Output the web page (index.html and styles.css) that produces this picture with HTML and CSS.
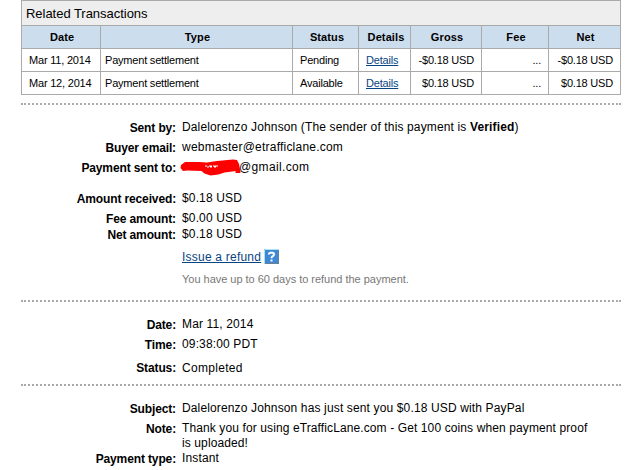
FILE: index.html
```html
<!DOCTYPE html>
<html lang="en">
<head>
<meta charset="utf-8">
<title>Transaction Details</title>
<link rel="stylesheet" href="styles.css">
</head>
<body>
<main class="page">
  <section class="transactions">
    <h2 class="caption">Related Transactions</h2>
    <div class="row head"><span>Date</span><span>Type</span><span class="status">Status</span><span class="details">Details</span><span>Gross</span><span>Fee</span><span>Net</span></div>
    <div class="row"><span>Mar 11, 2014</span><span>Payment settlement</span><span>Pending</span><span><a href="#">Details</a></span><span>-$0.18 USD</span><span>...</span><span>-$0.18 USD</span></div>
    <div class="row"><span>Mar 12, 2014</span><span>Payment settlement</span><span>Available</span><span><a href="#">Details</a></span><span>$0.18 USD</span><span>...</span><span>$0.18 USD</span></div>
  </section>

  <dl class="group parties">
    <dt>Sent by:</dt><dd class="sender">Dalelorenzo Johnson (The sender of this payment is <b>Verified</b>)</dd>
    <dt>Buyer email:</dt><dd class="email">webmaster@etrafficlane.com</dd>
    <dt>Payment sent to:</dt><dd class="recipient"><svg class="scribble" width="61" height="18" viewBox="0 0 61 18"><path fill="#f00" d="M5 3h14l8 .5L37 2l16-1.500 4 .5 2 4 1 5 .5 4h-5v-2l-3 .5-8 1-6 2-8 1-6-2-3-2.500-14-.5L3 12 .5 9 1 6z"/><path fill="#fff" d="M25 6.500h2v1h2v-1h3v1h1v-1h5v1h-2v1h-2v-1h-2v1h-2v-1h-1v1h-2v-1h-2z"/></svg>@gmail.com</dd>
  </dl>
  <dl class="group amounts">
    <dt>Amount received:</dt><dd>$0.18 USD</dd>
    <dt>Fee amount:</dt><dd>$0.00 USD</dd>
    <dt>Net amount:</dt><dd>$0.18 USD</dd>
  </dl>
  <div class="refund">
    <a href="#">Issue a refund</a><svg class="help" width="15" height="15" viewBox="0 0 15 15"><path fill="#3f88d5" d="M0 0h15v15H0z"/><path fill="none" stroke="#a9e4ee" d="M.5 15V.5H15"/><path fill="none" stroke="#6b7f93" d="M1 14.500h13.500V1"/><path fill="none" stroke="#fff" stroke-width="2" d="M5 5.500V4.800Q5.200 3.800 6.500 3.800h2Q10 3.800 10 5.200T8.500 7.300Q7.500 8 7.500 9.300M7.500 10.500v2"/></svg>
  </div>
  <p class="hint">You have up to 60 days to refund the payment.</p>

  <dl class="group timing">
    <dt>Date:</dt><dd>Mar 11, 2014</dd>
    <dt>Time:</dt><dd>09:38:00 PDT</dd>
    <dt class="level">Status:</dt><dd class="state">Completed</dd>
  </dl>

  <dl class="group message">
    <dt>Subject:</dt><dd>Dalelorenzo Johnson has just sent you $0.18 USD with PayPal</dd>
    <dt>Note:</dt><dd class="note">Thank you for using eTrafficLane.com - Get 100 coins when payment proof<br>is uploaded!</dd>
    <dt>Payment type:</dt><dd>Instant</dd>
  </dl>
</main>
</body>
</html>
```
FILE: styles.css
```css
* { box-sizing: border-box; }
body {
  margin: 0;
  background: #fff;
  color: #000;
  font: 12px/15px "Liberation Sans", Arial, sans-serif;
}
a { color: #084482; }
.page { width: 600px; height: 470px; margin-left: 21px; overflow: hidden; white-space: nowrap; }

.transactions { border: 1px solid #aaa; font-size: 11px; letter-spacing: -.2px; }
.caption { margin: 0; height: 24px; padding-left: 4px; background: #eee; font-size: 13px; font-weight: 400; line-height: 25px; letter-spacing: -.03px; }
.row {
  display: grid;
  grid-template-columns: 78px 192px 66px 52px 71px 67px 72px;
  height: 23px;
  border-top: 1px solid #aaa;
  line-height: 23px;
}
.row > span { padding: 0 7px; }
.row > span + span { border-left: 1px solid #aaa; }
.row > span:nth-child(2) { padding-left: 4px; }
.row > span:nth-child(n+5) { text-align: right; }
.row > span:nth-child(7) { padding-left: 0; }
.row.head { background: #cde; font-weight: 700; letter-spacing: .1px; }
.row.head > span:nth-child(n) { padding: 0 0 0 2px; text-align: center; }
.row.head > span.status { padding-left: 3px; }
.row.head > span.details { padding-left: 3px; }

.group { display: grid; grid-template-columns: 155px 1fr; column-gap: 6px; row-gap: 5px; margin: 0; letter-spacing: .14px; }
dt { text-align: right; font-weight: 700; padding-top: 1px; height: 15px; letter-spacing: -.13px; }
dt.level { padding-top: 0; }
dd { margin: 0; height: 15px; }
.parties, .timing, .message { border-top: 2px dotted #aaa; }
.parties { margin-top: 8px; padding-top: 15px; }
.email { letter-spacing: .22px; }
.state { letter-spacing: .3px; }
.recipient { display: flex; letter-spacing: .35px; }
.scribble { margin: -1px -2px 0 -2px; }
.amounts { grid-template-rows: 20px 16px 15px; row-gap: 0; margin-top: 16px; }
.refund { display: flex; gap: 3px; margin: 8px 0 0 161px; height: 16px; letter-spacing: .22px; }
.help { margin-top: -1px; }
.hint { margin: 6px 0 0 161px; color: #777; font-size: 11px; letter-spacing: -.02px; }
.timing { margin-top: 13px; padding-top: 15px; grid-template-rows: 20px 24px 15px; row-gap: 0; }
.message { margin-top: 8px; padding-top: 15px; grid-template-rows: 20px 30px 15px; row-gap: 0; }
.note { letter-spacing: .11px; }
```
